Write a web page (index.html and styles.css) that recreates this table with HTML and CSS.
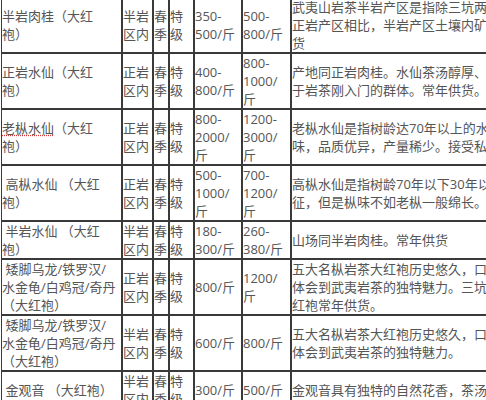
FILE: index.html
```html
<!DOCTYPE html>
<html lang="zh-CN">
<head>
<meta charset="utf-8">
<title>大红袍价格表</title>
<link rel="stylesheet" href="styles.css">
</head>
<body>
<div class="frame">
<table class="tea">
<colgroup>
<col class="w-name"><col class="w-area"><col class="w-season"><col class="w-grade"><col class="w-price"><col class="w-price2"><col class="w-desc">
</colgroup>
<tbody>
<tr>
<td class="name">半岩肉桂（大红袍）</td>
<td>半岩区内</td><td>春季</td><td>特级</td>
<td>350-<wbr>500/斤</td><td>500-<wbr>800/斤</td>
<td class="desc">武夷山岩茶半岩产区是指除三坑两涧以外的其他岩山区域，与<br>正岩产区相比，半岩产区土壤内矿物质含量较少。常年供<br>货</td>
</tr>
<tr>
<td class="name">正岩水仙（大红袍）</td>
<td>正岩区内</td><td>春季</td><td>特级</td>
<td>400-<wbr>800/斤</td><td>800-<wbr>1000/斤</td>
<td class="desc">产地同正岩肉桂。水仙茶汤醇厚、口感柔和，适合<br>于岩茶刚入门的群体。常年供货。</td>
</tr>
<tr>
<td class="name"><span class="spell">老枞水仙</span>（大红袍）</td>
<td>正岩区内</td><td>春季</td><td>特级</td>
<td>800-<wbr>2000/斤</td><td>1200-<wbr>3000/斤</td>
<td class="desc">老枞水仙是指树龄达70年以上的水仙茶树，具有明显的枞<br>味，品质优异，产量稀少。接受私人定制。</td>
</tr>
<tr>
<td class="name">&nbsp;高枞水仙 （大红袍）</td>
<td>正岩区内</td><td>春季</td><td>特级</td>
<td>500-<wbr>1000/斤</td><td>700-<wbr>1200/斤</td>
<td class="desc">高枞水仙是指树龄70年以下30年以上的水仙，具有一定枞味特<br>征，但是枞味不如老枞一般绵长。</td>
</tr>
<tr>
<td class="name">&nbsp;半岩水仙 （大红袍）</td>
<td>半岩区内</td><td>春季</td><td>特级</td>
<td>180-<wbr>300/斤</td><td>260-<wbr>380/斤</td>
<td class="desc">山场同半岩肉桂。常年供货</td>
</tr>
<tr>
<td class="name">&nbsp;矮脚乌龙/铁罗汉/水金龟/白鸡冠/奇丹 （大红袍）</td>
<td>正岩区内</td><td>春季</td><td>特级</td>
<td>800/斤</td><td>1200/斤</td>
<td class="desc">五大名枞岩茶大红袍历史悠久，口感醇厚，岩韵明显，能让人<br>体会到武夷岩茶的独特魅力。三坑两涧正岩产区大<br>红袍常年供货。</td>
</tr>
<tr>
<td class="name">&nbsp;矮脚乌龙/铁罗汉/水金龟/白鸡冠/奇丹 （大红袍）</td>
<td>半岩区内</td><td>春季</td><td>特级</td>
<td>600/斤</td><td>800/斤</td>
<td class="desc">五大名枞岩茶大红袍历史悠久，口感醇厚，岩韵明显，能让人<br>体会到武夷岩茶的独特魅力。</td>
</tr>
<tr>
<td class="name">&nbsp;金观音 （大红袍）</td>
<td>半岩区内</td><td>春季</td><td>特级</td>
<td>300/斤</td><td>500/斤</td>
<td class="desc">金观音具有独特的自然花香，茶汤金黄明亮，滋味醇厚。</td>
</tr>
</tbody>
</table>
</div>
</body>
</html>
```
FILE: styles.css
```css
html, body {
  margin: 0;
  padding: 0;
  background: #fff;
  overflow: hidden;
}

.frame {
  width: 486px;
  height: 400px;
  overflow: hidden;
  padding-left: 1px;
  box-sizing: border-box;
}

.tea {
  border-collapse: separate;
  border-spacing: 0;
  table-layout: fixed;
  width: 690px;
  margin-top: -3px;
  font-family: "Open Sans", "Noto Sans CJK SC", sans-serif;
  font-size: 13px;
  line-height: 18px;
  color: #555;
  text-spacing-trim: space-all;
}

.w-name { width: 121px; }
.w-area { width: 31px; }
.w-season { width: 16px; }
.w-grade { width: 25px; }
.w-price { width: 48px; }
.w-price2 { width: 49px; }
.w-desc { width: 400px; }

.tea td {
  box-sizing: border-box;
  border: 1px solid #3a3a3a;
  padding: 0 1px 0 0;
  vertical-align: middle;
  text-align: left;
  overflow: hidden;
}

.tea td.name {
  padding-right: 4px;
}

.tea td.desc {
  white-space: nowrap;
}

.spell {
  text-decoration: underline dotted #d23a3a;
  text-underline-offset: 2px;
}
```
